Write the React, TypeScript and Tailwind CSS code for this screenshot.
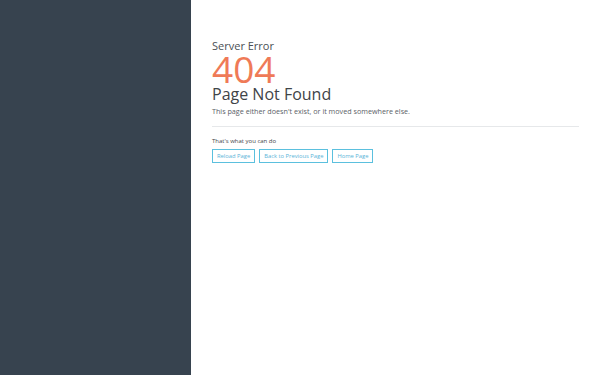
const buttons = ["Reload Page", "Back to Previous Page", "Home Page"];

export default function App() {
  return (
    <div
      className="flex h-[375px] w-[600px] bg-white"
      style={{ fontFamily: '"Open Sans", sans-serif' }}
    >
      <aside className="w-[191px] shrink-0 bg-[#37434f]" />
      <main className="flex-1 pl-[21px] pr-[21px] pt-[38px]">
        <div className="text-[11px] leading-[15px] text-[#4a4f55]">Server Error</div>
        <div className="text-[37px] leading-[32px] text-[#ef7a57]">404</div>
        <h1 className="text-[16px] leading-[19px] text-[#3f4448]">Page Not Found</h1>
        <p className="mt-[2px] text-[7.2px] leading-[10px] text-[#5a6168]">
          This page either doesn't exist, or it moved somewhere else.
        </p>
        <hr className="mt-[10px] border-t border-[#e6e8ea]" />
        <div className="mt-[10px] text-[6px] leading-[8px] text-[#3f4448]">That's what you can do</div>
        <div className="mt-[4px] flex gap-[4px]">
          {buttons.map((b) => (
            <button
              key={b}
              className="h-[14px] border border-[#5bc0de] px-[4px] text-[5.8px] leading-[12px] text-[#5bb4d8]"
            >
              {b}
            </button>
          ))}
        </div>
      </main>
    </div>
  );
}
